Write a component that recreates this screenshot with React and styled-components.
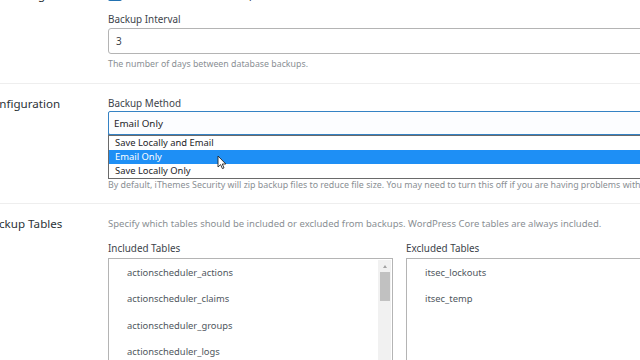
import React from 'react';
import styled, { createGlobalStyle } from 'styled-components';

const GlobalStyle = createGlobalStyle`
  html, body { margin: 0; padding: 0; background: #fff; }
  body { font-family: "Noto Sans", "Open Sans", sans-serif; color: #2c3338; }
`;

const Page = styled.div`
  width: 640px;
  height: 360px;
  overflow: hidden;
  position: relative;
`;

const Inner = styled.div`
  margin-top: -13px;
  margin-left: -15px;
  width: 900px;
`;

const Section = styled.div`
  display: grid;
  grid-template-columns: 123px 1fr;
  border-bottom: ${(p) => (p.$last ? 'none' : '1px solid #eeeeee')};
  padding: ${(p) => p.$pad || '0 0 12px'};
`;

const Heading = styled.div`
  font-size: 11.6px;
  line-height: 16px;
  color: #2c3338;
  margin-top: ${(p) => p.$top || '0'};
`;

const Field = styled.div`
  display: flex;
  flex-direction: column;
`;

const CheckRow = styled.div`
  display: flex;
  align-items: center;
  gap: 8px;
  height: 14px;
  font-size: 10px;
  margin-bottom: 12px;
`;

const Check = styled.span`
  width: 14px;
  height: 14px;
  border-radius: 2px;
  background: #2271b1;
  flex: none;
`;

const Label = styled.div`
  font-size: 9.9px;
  line-height: 12px;
  color: #3c434a;
  margin-bottom: ${(p) => p.$mb || '3px'};
`;

const TextInput = styled.div`
  height: 24px;
  border: 1px solid #b4b4b4;
  border-radius: 3px;
  background: #fff;
  display: flex;
  align-items: center;
  padding-left: 7px;
  font-size: 10px;
  color: #3c434a;
`;

const Help = styled.div`
  font-size: ${(p) => p.$size || '8.7px'};
  line-height: 12px;
  color: #8a8f94;
  white-space: nowrap;
  margin-top: ${(p) => p.$mt || '4px'};
`;

const SelectWrap = styled.div`
  position: relative;
`;

const Select = styled.div`
  height: 22px;
  border: 1px solid #3582c4;
  border-radius: 2px;
  box-shadow: 0 1px 0 0 #1f5f96, 0 2px 0 0 #dcecf9;
  background: #fcfdff;
  display: flex;
  align-items: center;
  padding-left: 5px;
  font-size: 9.8px;
  color: #1d2327;
`;

const Options = styled.div`
  position: absolute;
  left: 0;
  right: 0;
  top: 24px;
  border: 1px solid #6a6a6a;
  background: #fff;
  z-index: 2;
`;

const Option = styled.div`
  height: 14px;
  line-height: 14px;
  padding-left: 6px;
  font-size: 9.4px;
  color: ${(p) => (p.$active ? '#fff' : '#1d2327')};
  background: ${(p) => (p.$active ? '#1e8ff5' : '#fff')};
`;

const Cursor = styled.svg`
  position: absolute;
  left: 108px;
  top: 19px;
  z-index: 3;
`;

const Tables = styled.div`
  display: grid;
  grid-template-columns: 285px 1fr;
  column-gap: 13px;
  margin-top: 12px;
`;

const ListBox = styled.div`
  height: 130px;
  border: 1px solid #b4b4b4;
  display: flex;
  background: #fff;
`;

const Items = styled.div`
  flex: 1;
  padding: 6px 0 0 18px;
`;

const Item = styled.div`
  height: 26.3px;
  line-height: 16px;
  font-size: 9.4px;
  color: #50575e;
`;

const Track = styled.div`
  width: 13px;
  background: #f1f1f1;
  margin: 1px 1px 0 0;
  display: flex;
  flex-direction: column;
  align-items: center;
`;

const Arrow = styled.div`
  width: 0;
  height: 0;
  border-left: 2.5px solid transparent;
  border-right: 2.5px solid transparent;
  border-bottom: 3px solid #a3a3a3;
  margin: 5px 0 4px;
`;

const Thumb = styled.div`
  width: 10px;
  height: 29px;
  background: #c1c1c1;
`;

const included = [
  'actionscheduler_actions',
  'actionscheduler_claims',
  'actionscheduler_groups',
  'actionscheduler_logs',
  'actionscheduler_logs_meta',
];

const excluded = ['itsec_lockouts', 'itsec_temp'];

export default function App() {
  return (
    <Page>
      <GlobalStyle />
      <Inner>
        <Section $pad="0 0 13px">
          <Heading>Scheduling</Heading>
          <Field>
            <CheckRow>
              <Check />
              <span>Schedule database backups</span>
            </CheckRow>
            <Label>Backup Interval</Label>
            <TextInput>3</TextInput>
            <Help $size="8.8px" $mt="4px">The number of days between database backups.</Help>
          </Field>
        </Section>

        <Section $pad="13px 0 12px">
          <Heading $top="-1px">Configuration</Heading>
          <Field>
            <Label $mb="2px">Backup Method</Label>
            <SelectWrap>
              <Select>Email Only</Select>
              <Options>
                <Option>Save Locally and Email</Option>
                <Option $active>Email Only</Option>
                <Option>Save Locally Only</Option>
                <Cursor width="10" height="15" viewBox="0 0 10 15">
                  <path d="M1 1 L1 12 L3.6 9.6 L5.4 13.6 L7 12.9 L5.3 9 L8.8 9 Z" fill="#fff" stroke="#222" strokeWidth="0.9" strokeLinejoin="round" />
                </Cursor>
              </Options>
            </SelectWrap>
            <Help $size="8.85px" $mt="44px">
              By default, iThemes Security will zip backup files to reduce file size. You may need to turn this off if you are having problems with backups.
            </Help>
          </Field>
        </Section>

        <Section $pad="13px 0 0" $last>
          <Heading $top="-1px">Backup Tables</Heading>
          <Field>
            <Help $size="9.5px" $mt="1px">
              Specify which tables should be included or excluded from backups. WordPress Core tables are always included.
            </Help>
            <Tables>
              <div>
                <Label $mb="4px">Included Tables</Label>
                <ListBox>
                  <Items>
                    {included.map((t) => (
                      <Item key={t}>{t}</Item>
                    ))}
                  </Items>
                  <Track>
                    <Arrow />
                    <Thumb />
                  </Track>
                </ListBox>
              </div>
              <div>
                <Label $mb="4px">Excluded Tables</Label>
                <ListBox>
                  <Items>
                    {excluded.map((t) => (
                      <Item key={t}>{t}</Item>
                    ))}
                  </Items>
                </ListBox>
              </div>
            </Tables>
          </Field>
        </Section>
      </Inner>
    </Page>
  );
}
